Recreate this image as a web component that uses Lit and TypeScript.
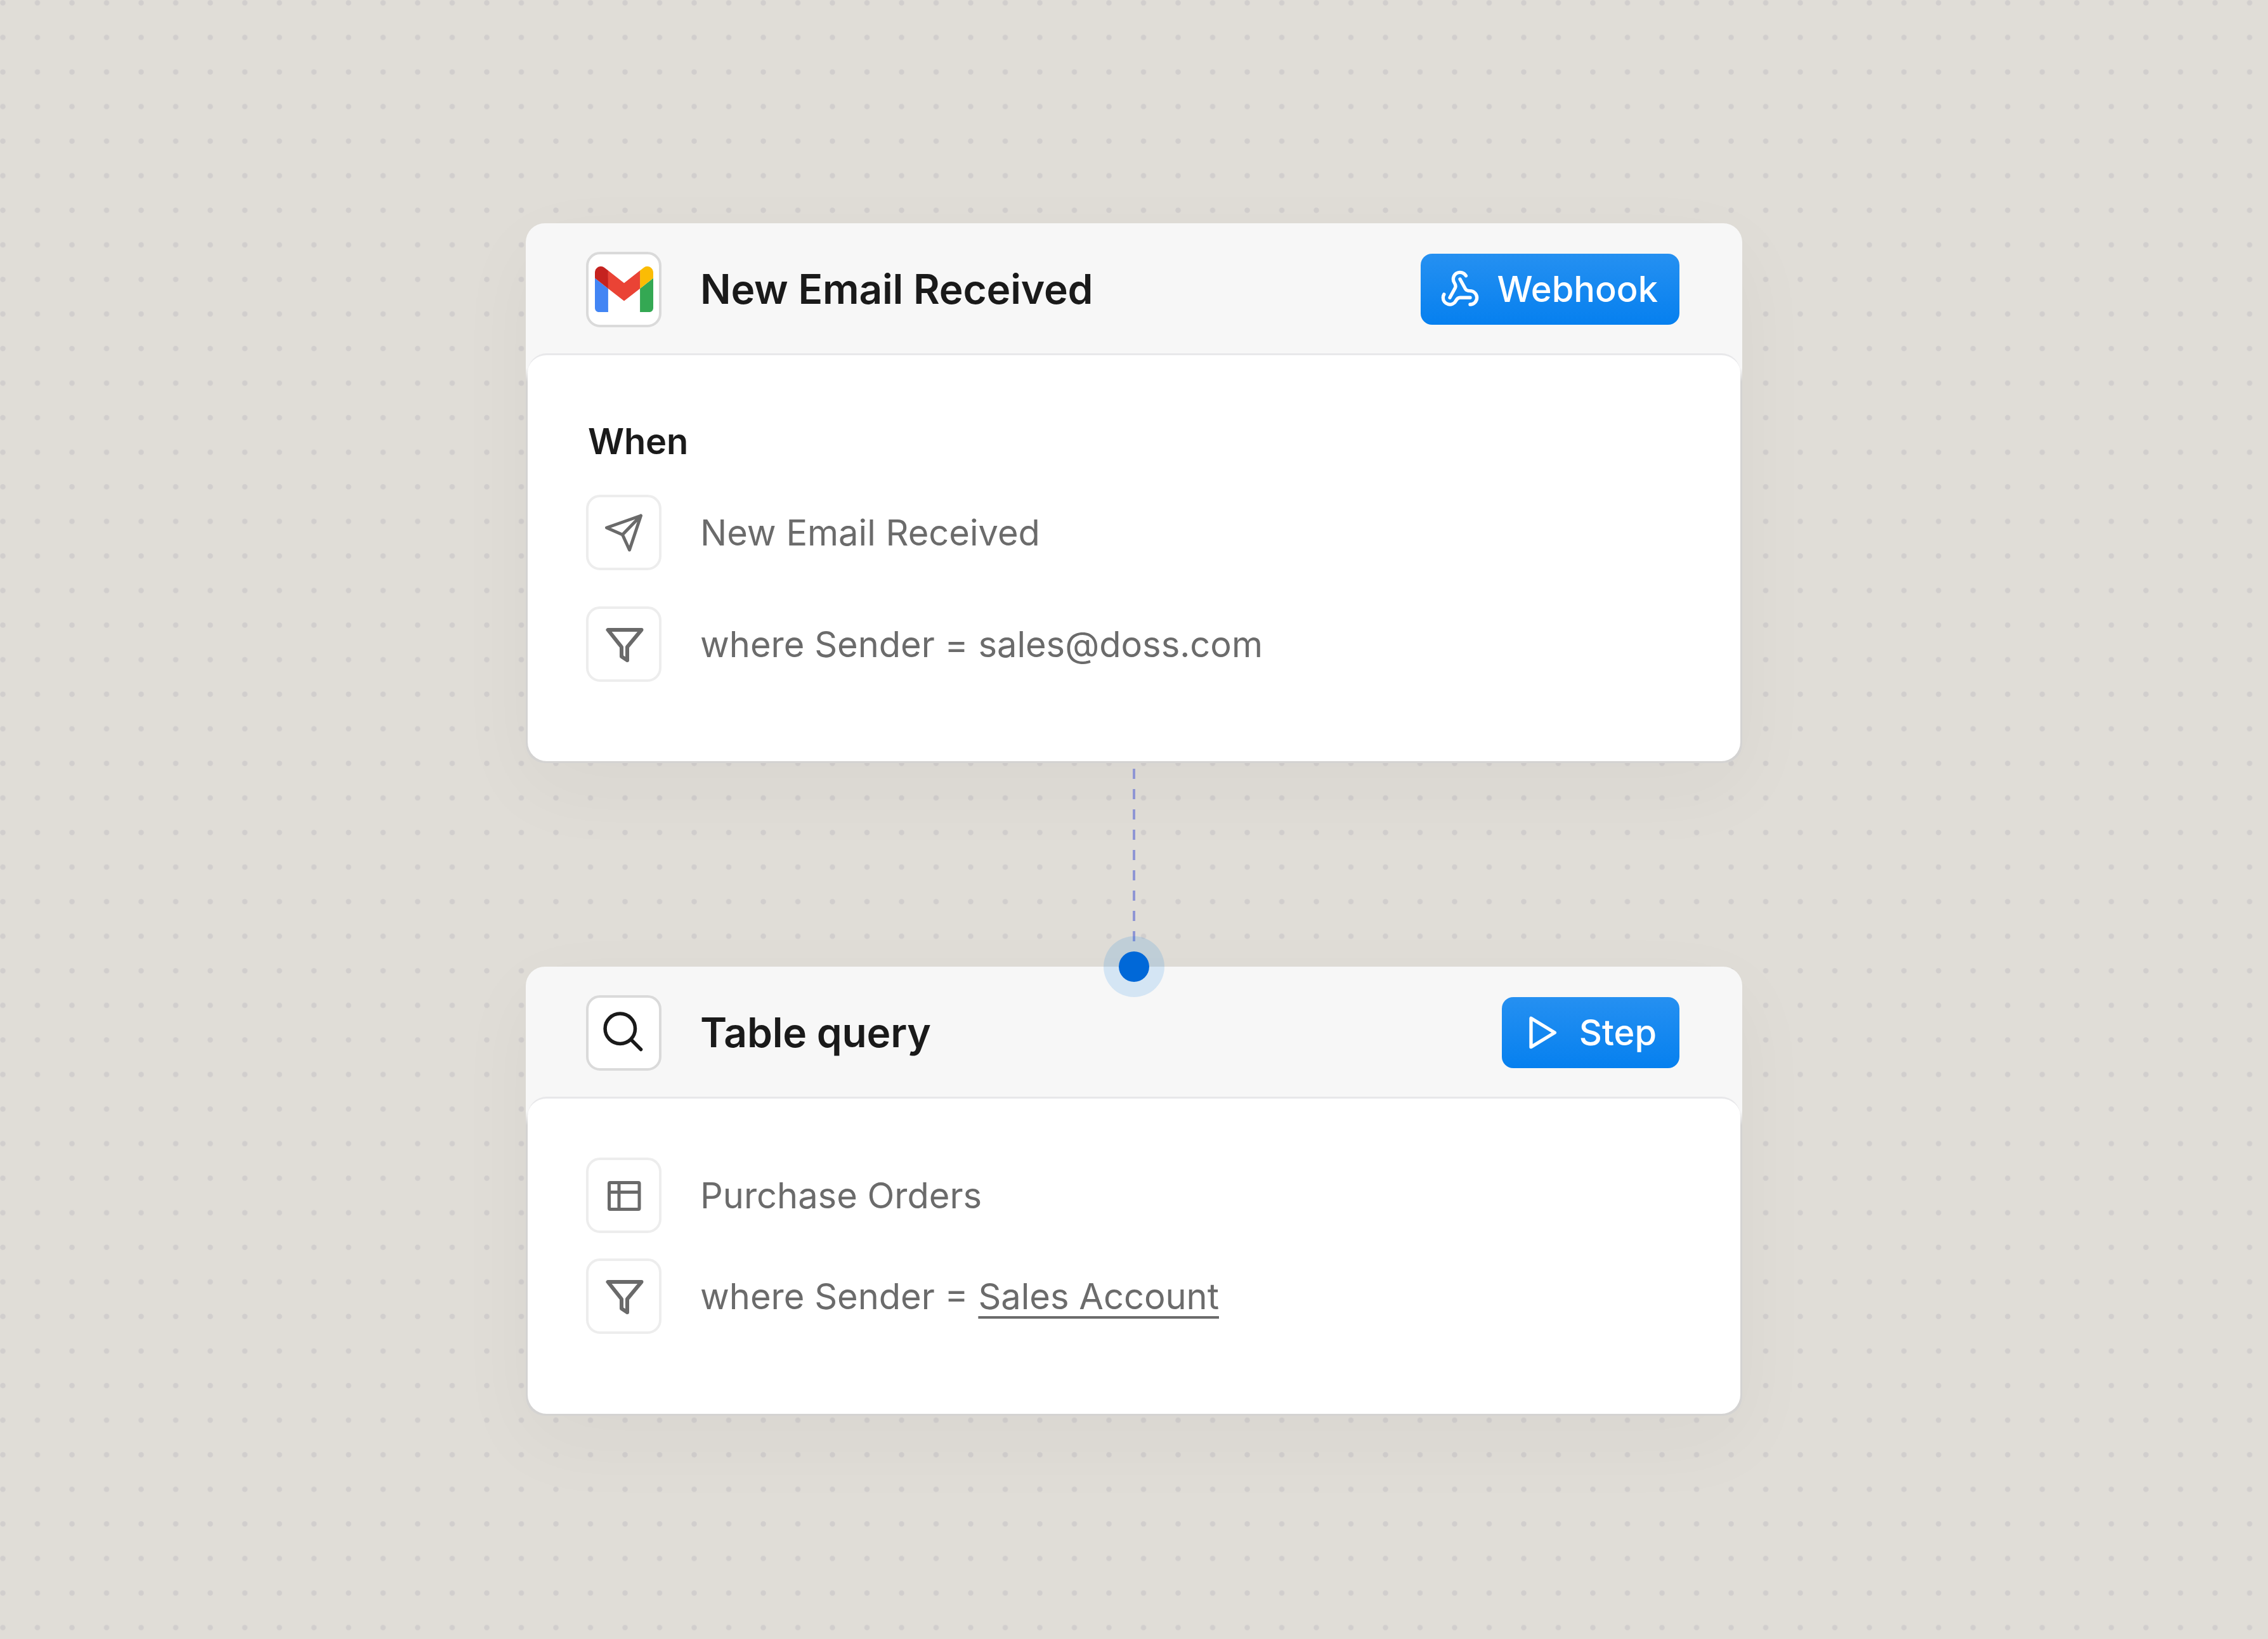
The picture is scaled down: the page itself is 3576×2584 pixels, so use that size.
import { LitElement, html, css, svg } from "lit";
import { customElement } from "lit/decorators.js";

const sendIcon = html`<svg class="ico" viewBox="-1.500 0 111 111" fill="none" stroke="#6a6a6a" stroke-width="5" stroke-linejoin="round" stroke-linecap="round">${svg`<path d="M81 29 27 48l25 11 11 24ZM81 29 52 59"/>`}</svg>`;
const funnelIcon = html`<svg class="ico" viewBox="-1.500 0 111 111" fill="none" stroke="#6a6a6a" stroke-width="6" stroke-linejoin="round">${svg`<path d="M29 33h53L59.500 60v21l-9-6V60Z"/>`}</svg>`;
const tableIcon = html`<svg class="ico" viewBox="-1.500 0 111 111" fill="none" stroke="#6a6a6a" stroke-width="5" stroke-linejoin="round">${svg`<rect x="31" y="35.500" width="47.500" height="42" rx="1.500"/><path d="M31 50.500h47.500M46.500 35.500v42"/>`}</svg>`;
const searchIcon = html`<svg class="ico" viewBox="-1.500 0 111 111" fill="none" stroke="#1a1a1a" stroke-width="5.500" stroke-linecap="round">${svg`<circle cx="48.300" cy="48.700" r="23.700"/><path d="m67 67.500 14 14"/>`}</svg>`;
const gmailIcon = html`<svg class="gmail" viewBox="52 42 88 66" preserveAspectRatio="none">${svg`
  <path fill="#4285f4" d="M58 108h14V74L52 59v43c0 3.320 2.690 6 6 6"/>
  <path fill="#34a853" d="M120 108h14c3.320 0 6-2.690 6-6V59l-20 15"/>
  <path fill="#fbbc04" d="M120 48v26l20-15v-8c0-7.420-8.470-11.650-14.400-7.200"/>
  <path fill="#ea4335" d="M72 74V48l24 18 24-18v26L96 92"/>
  <path fill="#c5221f" d="M52 51v8l20 15V48l-5.600-4.200c-5.940-4.450-14.400-.22-14.400 7.200"/>`}</svg>`;
const webhookIcon = html`<svg class="btn-ico" viewBox="0 0 24 24" fill="none" stroke="#fff" stroke-width="2" stroke-linecap="round" stroke-linejoin="round">${svg`
  <path d="M18 16.980h-5.990c-1.100 0-1.950.94-2.480 1.900A4 4 0 0 1 2 17c.01-.7.2-1.400.57-2"/>
  <path d="m6 17 3.130-5.780c.53-.97.1-2.180-.5-3.100a4 4 0 1 1 6.890-4.060"/>
  <path d="m12 6 3.130 5.730C15.660 12.700 16.900 13 18 13a4 4 0 0 1 0 8"/>`}</svg>`;
const playIcon = html`<svg class="btn-ico" viewBox="0 0 24 24" fill="none" stroke="#fff" stroke-width="2" stroke-linecap="round" stroke-linejoin="round">${svg`<path d="M6 3.500v17L20 12Z"/>`}</svg>`;

@customElement("app-root")
export class AppRoot extends LitElement {
  static styles = css`
    :host {
      display: block;
      width: 3576px;
      height: 2584px;
      font-family: Inter, "Liberation Sans", sans-serif;
      background-color: #e0ddd7;
      background-image: radial-gradient(circle at 4.500px 4.500px, #d1cecd 0, #d1cecd 3.500px, transparent 5px);
      background-size: 54.500px 54.500px;
      overflow: hidden;
    }
    .stage {
      display: flex;
      flex-direction: column;
      align-items: center;
      padding-top: 352px;
    }
    .card {
      width: 1918px;
      box-sizing: border-box;
      padding: 0 3px 3px;
      background: linear-gradient(#f7f7f7 0 228px, #d4d3d2 250px);
      border-radius: 30px;
      box-shadow: 0 40px 130px rgba(40, 40, 40, 0.04);
    }
    .head {
      display: flex;
      align-items: center;
      box-sizing: border-box;
      height: 205px;
      padding: 3px 96px 0 92px;
      gap: 61px;
    }
    .box {
      flex: none;
      width: 119px;
      height: 119px;
      box-sizing: border-box;
      border: 4px solid #ededed;
      border-radius: 22px;
      background: #fff;
      display: flex;
      align-items: center;
      justify-content: center;
    }
    .head .box { border-color: #dadada; }
    .ico { width: 111px; height: 111px; display: block; }
    .gmail { width: 92px; height: 72px; display: block; }
    .title {
      flex: 1;
      font-size: 64px;
      font-weight: 600;
      color: #1a1a1a;
      letter-spacing: -0.2px;
      line-height: 76px;
    }
    .btn {
      display: flex;
      align-items: center;
      gap: 28px;
      height: 112px;
      box-sizing: border-box;
      padding: 0 36px 0 30px;
      border-radius: 18px;
      background: linear-gradient(#2590f1, #0680ef);
      color: #fff;
      font-size: 56px;
      font-weight: 500;
    }
    .btn.wide { gap: 26px; padding-right: 34px; }
    .btn-ico { width: 64px; height: 64px; display: block; }
    .body {
      background: #fff;
      border-top: 3px solid #e8e8ea;
      border-radius: 30px;
      display: flex;
      flex-direction: column;
    }
    .body.first { padding: 102px 92px 125px; gap: 57px; }
    .body.second { padding: 93px 92px 126px; gap: 40px; }
    .when {
      font-size: 56px;
      font-weight: 600;
      color: #1a1a1a;
      letter-spacing: -0.2px;
      line-height: 68px;
      padding-left: 3px;
      margin-bottom: -7px;
    }
    .row {
      display: flex;
      align-items: center;
      gap: 61px;
      font-size: 56px;
      color: #6b6b6b;
      line-height: 72px;
    }
    .link {
      text-decoration: underline;
      text-decoration-thickness: 3.500px;
      text-underline-offset: 11px;
      text-decoration-skip-ink: none;
    }
    .link-wrap {
      position: relative;
      width: 1918px;
      height: 321px;
      display: flex;
      justify-content: center;
      z-index: 1;
    }
    .dash {
      width: 4px;
      height: 272px;
      margin-top: 9px;
      background: repeating-linear-gradient(#8f96d4 0 16px, transparent 16px 32px);
    }
    .dot {
      position: absolute;
      left: 911px;
      bottom: -48px;
      width: 96px;
      height: 96px;
      box-sizing: border-box;
      border: 24px solid rgba(0, 120, 230, 0.14);
      border-radius: 50%;
      background: #0068d8;
      background-clip: padding-box;
    }
  `;

  render() {
    return html`<div class="stage">
      <section class="card">
        <header class="head">
          <div class="box">${gmailIcon}</div>
          <div class="title">New Email Received</div>
          <div class="btn wide">${webhookIcon}<span>Webhook</span></div>
        </header>
        <div class="body first">
          <div class="when">When</div>
          <div class="row"><div class="box">${sendIcon}</div><span>New Email Received</span></div>
          <div class="row"><div class="box">${funnelIcon}</div><span>where Sender = sales@doss.com</span></div>
        </div>
      </section>
      <div class="link-wrap"><div class="dash"></div><div class="dot"></div></div>
      <section class="card">
        <header class="head">
          <div class="box">${searchIcon}</div>
          <div class="title">Table query</div>
          <div class="btn">${playIcon}<span>Step</span></div>
        </header>
        <div class="body second">
          <div class="row"><div class="box">${tableIcon}</div><span>Purchase Orders</span></div>
          <div class="row"><div class="box">${funnelIcon}</div><span>where Sender = <span class="link">Sales Account</span></span></div>
        </div>
      </section>
    </div>`;
  }
}
